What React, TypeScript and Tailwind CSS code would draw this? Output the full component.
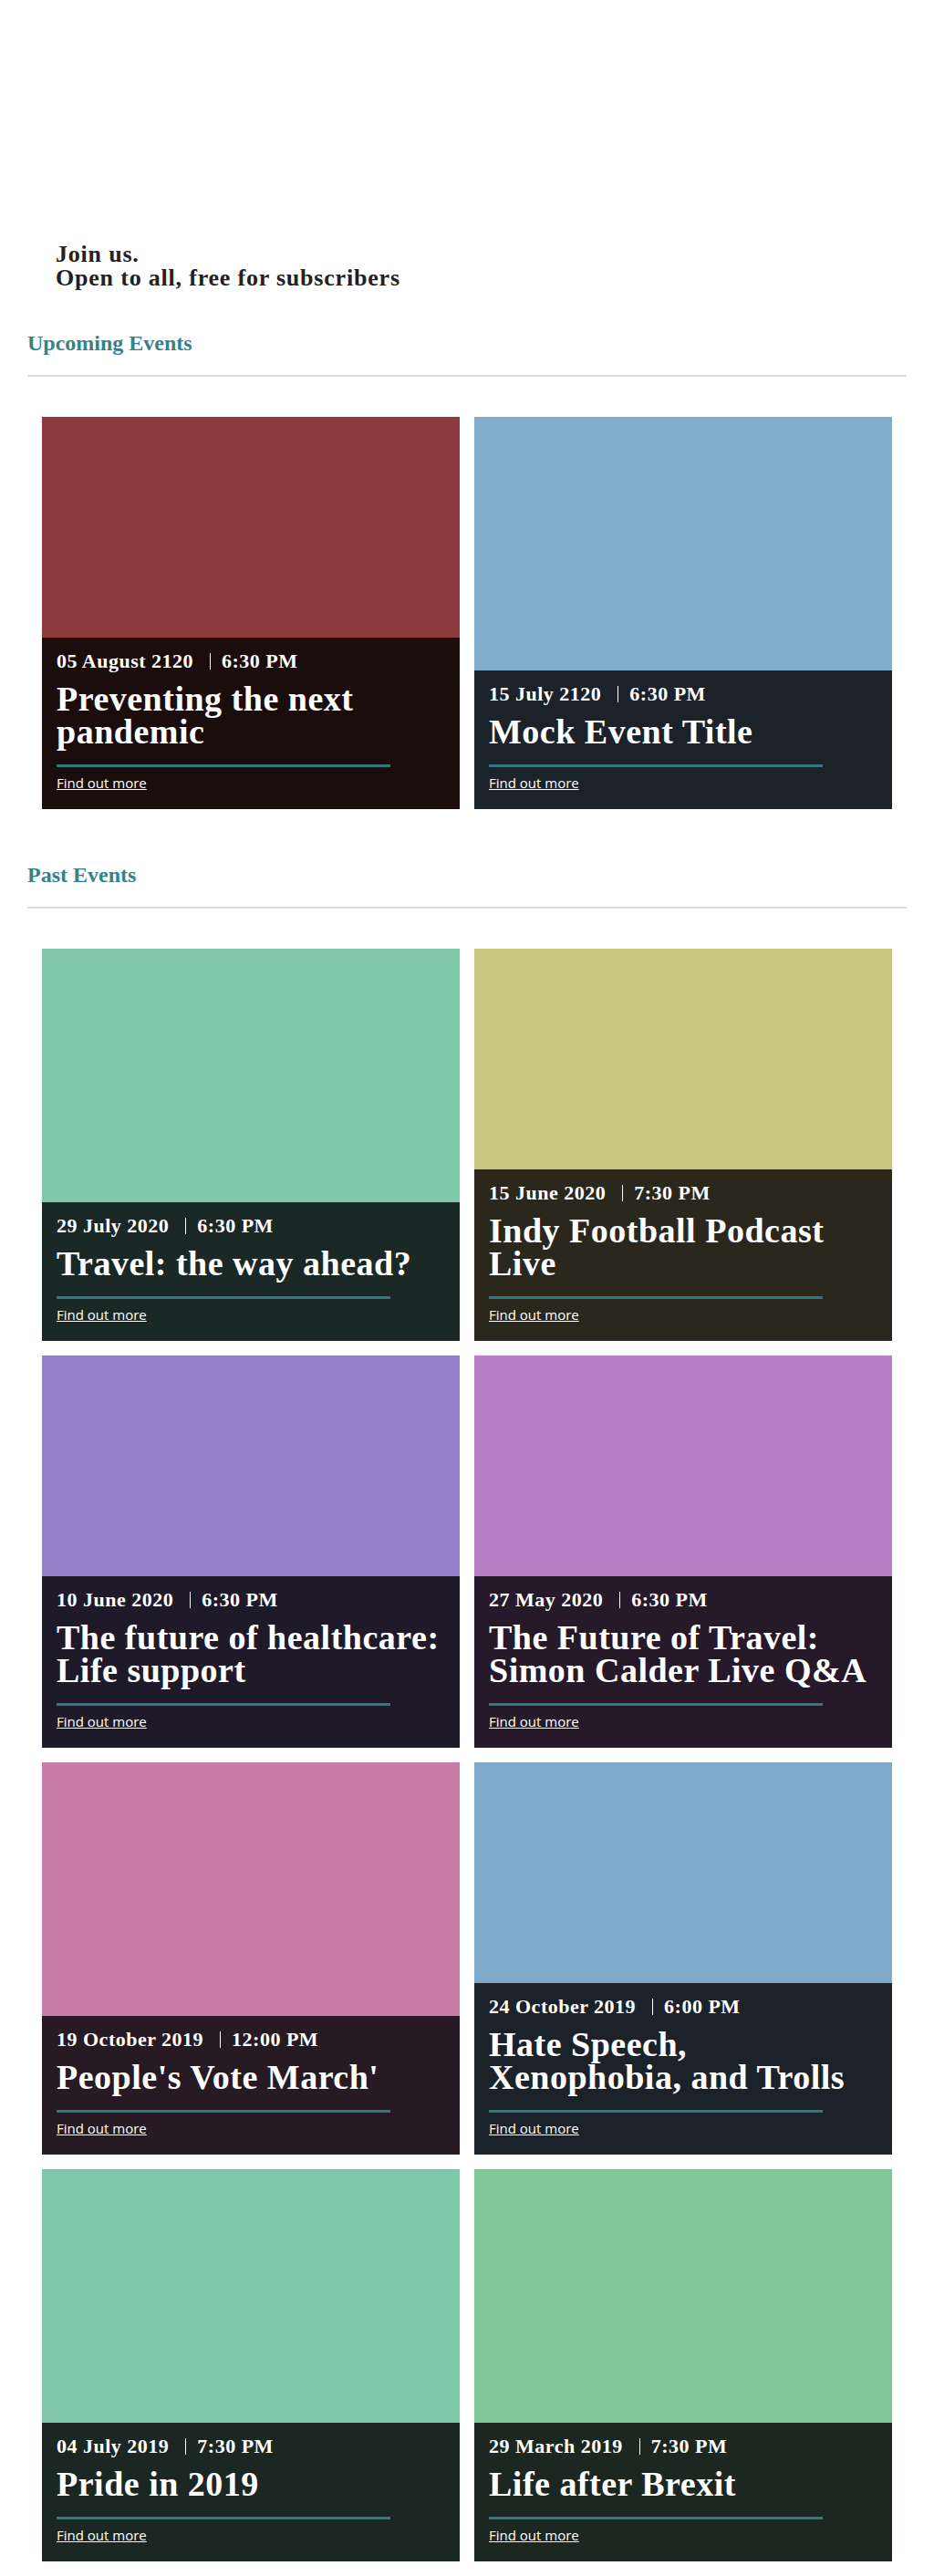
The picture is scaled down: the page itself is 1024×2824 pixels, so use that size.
type EventItem = {
  date: string;
  time: string;
  title: string;
  image: string;
  panel: string;
};

const upcoming: EventItem[] = [
  { date: "05 August 2120", time: "6:30 PM", title: "Preventing the next pandemic", image: "bg-[#8e3b3f]", panel: "bg-[#1c0d0d]" },
  { date: "15 July 2120", time: "6:30 PM", title: "Mock Event Title", image: "bg-[#7fadcb]", panel: "bg-[#1c2229]" },
];

const past: EventItem[] = [
  { date: "29 July 2020", time: "6:30 PM", title: "Travel: the way ahead?", image: "bg-[#7fc8aa]", panel: "bg-[#1b2926]" },
  { date: "15 June 2020", time: "7:30 PM", title: "Indy Football Podcast Live", image: "bg-[#c9c67f]", panel: "bg-[#2a281d]" },
  { date: "10 June 2020", time: "6:30 PM", title: "The future of healthcare: Life support", image: "bg-[#9280c8]", panel: "bg-[#1f1a29]" },
  { date: "27 May 2020", time: "6:30 PM", title: "The Future of Travel: Simon Calder Live Q&A", image: "bg-[#b97fc6]", panel: "bg-[#26192a]" },
  { date: "19 October 2019", time: "12:00 PM", title: "People's Vote March'", image: "bg-[#c97ca5]", panel: "bg-[#281a22]" },
  { date: "24 October 2019", time: "6:00 PM", title: "Hate Speech, Xenophobia, and Trolls", image: "bg-[#7fa9ca]", panel: "bg-[#1c2229]" },
  { date: "04 July 2019", time: "7:30 PM", title: "Pride in 2019", image: "bg-[#7fc7aa]", panel: "bg-[#1b2722]" },
  { date: "29 March 2019", time: "7:30 PM", title: "Life after Brexit", image: "bg-[#7fc794]", panel: "bg-[#1b2720]" },
];

function EventCard({ item }: { item: EventItem }) {
  return (
    <div className="flex h-[430px] flex-col">
      <div className={`flex-1 ${item.image}`} />
      <div className={`px-4 pt-[13px] pb-[17px] text-white ${item.panel}`}>
        <p className="font-['Liberation_Serif',serif] text-[22px] leading-[26px] font-bold tracking-[0.5px]">
          {item.date}
          <span className="mr-3 ml-[18px] inline-block h-[18px] w-px bg-white align-[-2px]" />
          {item.time}
        </p>
        <h3 className="mt-[10px] font-['Liberation_Serif',serif] text-[38px] leading-[36px] font-bold tracking-[0.5px]">
          {item.title}
        </h3>
        <div className="mt-[18px] h-[3px] w-[366px] bg-[#2e7b7f]" />
        <a
          href="#"
          className="mt-[7px] inline-block font-['Open_Sans',sans-serif] text-[15px] leading-5 text-white underline"
        >
          Find out more
        </a>
      </div>
    </div>
  );
}

function Section({ title, items, className }: { title: string; items: EventItem[]; className: string }) {
  return (
    <section className={`mx-[30px] ${className}`}>
      <h2 className="font-['Liberation_Serif',serif] text-[24px] leading-[29px] font-bold text-[#33848a]">
        {title}
      </h2>
      <div className="mt-[20px] h-[2px] bg-[#d9dde1]" />
      <div className="grid grid-cols-2 gap-4 px-4 pt-[44px]">
        {items.map((item) => (
          <EventCard key={item.title} item={item} />
        ))}
      </div>
    </section>
  );
}

export default function App() {
  return (
    <main className="min-h-screen bg-white pt-[266px] pb-[17px]">
      <div className="px-[61px] font-['Liberation_Serif',serif] text-[26px] leading-[26px] font-bold tracking-[0.8px] text-[#222222]">
        <p>Join us.</p>
        <p>Open to all, free for subscribers</p>
      </div>
      <Section title="Upcoming Events" items={upcoming} className="mt-[44px]" />
      <Section title="Past Events" items={past} className="mt-[58px]" />
    </main>
  );
}
